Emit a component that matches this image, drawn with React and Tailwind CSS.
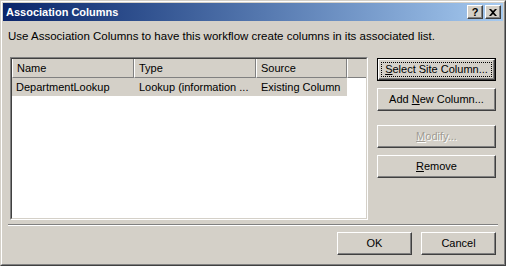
import React from 'react';

const font = { fontFamily: '"Liberation Sans", Arial, sans-serif' };

const Key = ({ children }) => <span className="underline underline-offset-[1px]">{children}</span>;

const ClassicButton = ({ children, isDefault, disabled, className = '' }) => {
  if (isDefault) {
    return (
      <div className={`border border-black ${className}`}>
        <div className="h-full border border-t-white border-l-white border-r-[#404040] border-b-[#404040] shadow-[inset_-1px_-1px_0_#808080] bg-[#d4d0c8] p-[2px]">
          <div className="flex h-full items-center justify-center border border-dotted border-black text-[11px] text-black">
            {children}
          </div>
        </div>
      </div>
    );
  }
  return (
    <div
      className={`flex items-center justify-center border border-t-white border-l-white border-r-[#404040] border-b-[#404040] shadow-[inset_-1px_-1px_0_#808080] bg-[#d4d0c8] text-[11px] ${
        disabled ? 'text-[#a09c94] [text-shadow:1px_1px_0_#ffffff]' : 'text-black'
      } ${className}`}
    >
      {children}
    </div>
  );
};

const TitleButton = ({ children }) => (
  <div className="flex h-[14px] w-[16px] items-center justify-center border border-t-white border-l-white border-r-[#404040] border-b-[#404040] shadow-[inset_-1px_-1px_0_#808080] bg-[#d4d0c8]">
    {children}
  </div>
);

const columns = [
  { label: 'Name', width: 'w-[122px]' },
  { label: 'Type', width: 'w-[122px]' },
  { label: 'Source', width: 'w-[91px]' },
];

const rows = [{ name: 'DepartmentLookup', type: 'Lookup (information ...', source: 'Existing Column' }];

const App = () => {
  return (
    <div className="h-[269px] w-[509px] bg-white" style={font}>
      <div className="h-[266px] w-[506px] border border-t-[#d4d0c8] border-l-[#d4d0c8] border-r-[#404040] border-b-[#404040]">
        <div className="flex h-full flex-col border border-t-white border-l-white border-r-[#808080] border-b-[#808080] bg-[#d4d0c8] p-[1px]">
          {/* title bar */}
          <div className="flex h-[18px] items-center bg-gradient-to-r from-[#0a246a] to-[#a6caf0] pl-[3px] pr-[2px]">
            <span className="flex-1 text-[11px] font-bold text-white">Association Columns</span>
            <div className="flex gap-[2px]">
              <TitleButton>
                <span className="text-[11px] font-bold leading-none text-black">?</span>
              </TitleButton>
              <TitleButton>
                <svg width="8" height="7" viewBox="0 0 8 7">
                  <path d="M0 0h2l2 2l2-2h2l-3 3.5l3 3.5h-2l-2-2l-2 2h-2l3-3.5z" fill="#000" />
                </svg>
              </TitleButton>
            </div>
          </div>

          <div className="flex flex-1 flex-col px-[5px]">
            <p className="mt-[8px] h-[14px] text-[11.5px] leading-[14px] text-black">
              Use Association Columns to have this workflow create columns in its associated list.
            </p>

            <div className="mt-[14px] flex items-start">
              {/* list view */}
              <div className="ml-[2px] h-[163px] w-[358px] border border-t-[#808080] border-l-[#808080] border-r-white border-b-white">
                <div className="flex h-full flex-col border border-t-[#404040] border-l-[#404040] border-r-[#d4d0c8] border-b-[#d4d0c8] bg-white">
                  <div className="flex h-[19px]">
                    {columns.map((col) => (
                      <div
                        key={col.label}
                        className={`${col.width} flex items-center border-r border-b border-r-[#808080] border-b-[#808080] border-l border-l-white bg-[#d4d0c8] pl-[4px] text-[11px] text-black`}
                      >
                        {col.label}
                      </div>
                    ))}
                    <div className="flex-1 border-b border-l border-b-[#808080] border-l-white bg-[#d4d0c8]" />
                  </div>
                  {rows.map((row) => (
                    <div key={row.name} className="flex h-[18px] w-[335px] items-center bg-[#d4d0c8] text-[11px] text-black">
                      <span className="w-[122px] pl-[4px]">{row.name}</span>
                      <span className="w-[122px] pl-[5px]">{row.type}</span>
                      <span className="w-[91px] pl-[5px]">{row.source}</span>
                    </div>
                  ))}
                </div>
              </div>

              {/* side buttons */}
              <div className="ml-[9px] mt-[1px] flex w-[119px] flex-col">
                <ClassicButton isDefault className="h-[23px]">
                  <Key>S</Key>elect Site Column...
                </ClassicButton>
                <ClassicButton className="mt-[7px] h-[23px]">
                  Add&nbsp;<Key>N</Key>ew Column...
                </ClassicButton>
                <ClassicButton disabled className="mt-[14px] h-[23px]">
                  <Key>M</Key>odify...
                </ClassicButton>
                <ClassicButton className="mt-[7px] h-[23px]">
                  <Key>R</Key>emove
                </ClassicButton>
              </div>
            </div>

            {/* separator */}
            <div className="mt-[4px] border-t border-b border-t-[#808080] border-b-white" />

            <div className="mt-[6px] flex justify-end gap-[9px] pr-[2px]">
              <ClassicButton className="h-[23px] w-[75px]">OK</ClassicButton>
              <ClassicButton className="h-[23px] w-[75px]">Cancel</ClassicButton>
            </div>
          </div>
        </div>
      </div>
    </div>
  );
};

export default App;
